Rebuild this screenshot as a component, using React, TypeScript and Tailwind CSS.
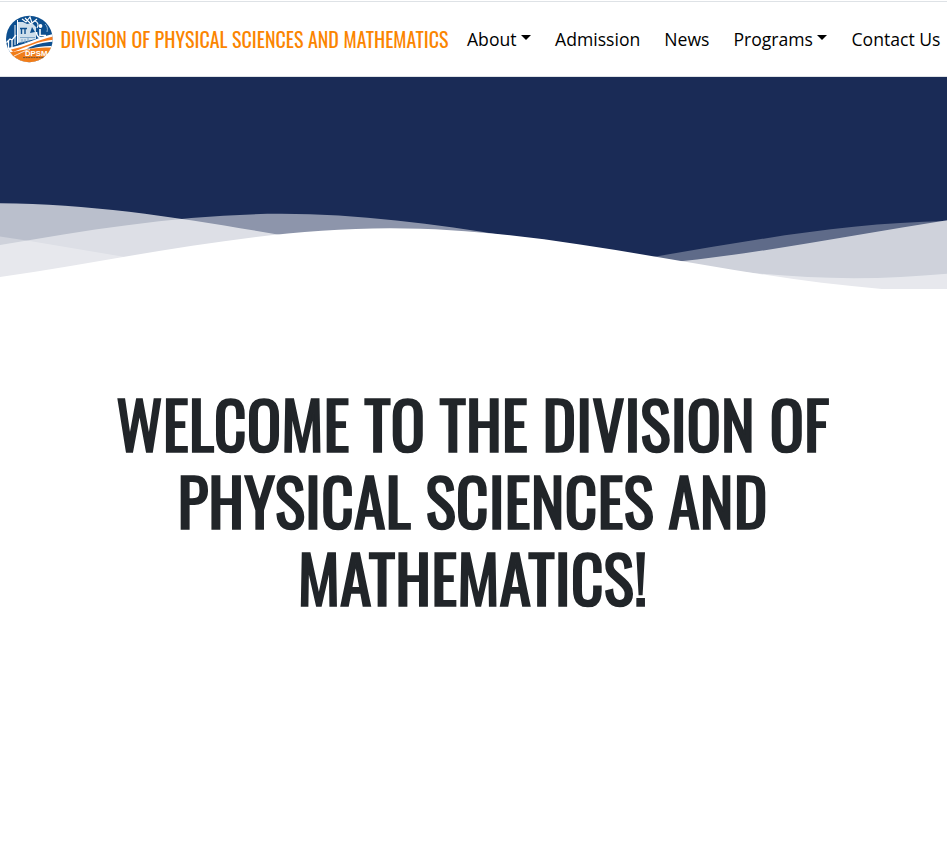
const wavePath = 'M-160 44c30 0 58-18 88-18s58 18 88 18 58-18 88-18 58 18 88 18v44h-352z';

function Logo() {
  return (
    <svg viewBox="0 0 48 48" className="h-12 w-12 shrink-0">
      <defs>
        <clipPath id="seal">
          <circle cx="24.3" cy="24" r="23.3" />
        </clipPath>
      </defs>
      <g clipPath="url(#seal)">
        <rect width="48" height="48" fill="#0d4f8f" />
        <path d="M13 7v21l18-4V12l-4-4-5 1-4-2z" fill="#e6eff6" opacity=".9" />
        <path d="M10 10v20M12.500 5v24" stroke="#fff" strokeWidth="1" />
        <path d="M15 13.500h7M16.500 14v5M20 14v5" stroke="#0d4f8f" strokeWidth="1.400" fill="none" />
        <path d="M15 22.500h15M17 24v4M20 24v4M23 23v4" stroke="#7fa6c8" strokeWidth="1" fill="none" />
        <path d="M25 18l2-6 3 5z" fill="#0d4f8f" />
        <path d="M17 4l4 3 4-5 2 6 5-4M20 3l6 6M30 6c3 1 4 4 2 7" stroke="#fff" strokeWidth="1.100" fill="none" />
        <circle cx="35.500" cy="11" r="1.900" fill="#fff" />
        <path d="M35 14v6.500h6M31.500 17c0 6 6 8 9 4.500" stroke="#fff" strokeWidth="1.600" fill="none" />
        <path d="M40 9c2 2 3 4 2 8" stroke="#b9d0e3" strokeWidth=".8" fill="none" />
        <path d="M1 28l4-4 2 1 4-5M3.500 26v9M7 24v11" stroke="#fff" strokeWidth="1.300" fill="none" />
        <path d="M2 33C18 31 30 23 48 19v29H0z" fill="#fff" />
        <path d="M6 34.500C20 32 32 25 48 21.500v3.300C34 26 22 32 8 37z" fill="#f47b20" />
        <path d="M22 33.500c9-4.500 16-6.300 26-6.800v4.300c-9-.2-15 .6-22 2.600z" fill="#0d4f8f" />
        <path d="M4 37.500c10-1 20-5.500 44-5v16H0z" fill="#f07d1a" />
        <path d="M9 41c5-2 9-5 16-6.500" stroke="#fff" strokeWidth=".8" fill="none" />
      </g>
      <text x="20" y="41.300" fontSize="8" fontWeight="700" fill="#fff" textLength="22.500" lengthAdjust="spacingAndGlyphs" className="font-['Liberation_Sans',sans-serif]">DPSM</text>
      <path d="M18 42.600h21" stroke="#7a5330" strokeWidth="1" strokeDasharray="2 .6" />
    </svg>
  );
}

function NavItem({ label, menu = false }: { label: string; menu?: boolean }) {
  return (
    <a className="flex items-center whitespace-nowrap">
      {label}
      {menu && <span className="ml-[4.5px] mt-[-2px] border-x-[5.3px] border-t-[5.3px] border-x-transparent border-t-black" />}
    </a>
  );
}

export default function App() {
  return (
    <div className="min-h-[867px] overflow-hidden bg-white font-['Open_Sans',sans-serif] text-black">
      <header className="mt-px flex h-[76px] items-center border-y border-[#dee2e6] bg-white pl-[5px]">
        <Logo />
        <span className="ml-[7.5px] w-[406.5px] whitespace-nowrap font-['Oswald',sans-serif] text-[20px] text-[#fb8500]">
          DIVISION OF PHYSICAL SCIENCES AND MATHEMATICS
        </span>
        <nav className="flex gap-6 text-[17.6px]">
          <NavItem label="About" menu />
          <NavItem label="Admission" />
          <NavItem label="News" />
          <NavItem label="Programs" menu />
          <NavItem label="Contact Us" />
        </nav>
      </header>

      <section className="h-[212px] overflow-hidden bg-[#1a2b56] pt-[119px]">
        <svg viewBox="0 24 145.4 28" preserveAspectRatio="none" className="block h-[100px] w-full">
          <path d={wavePath} transform="translate(71.4 0)" fill="#fff" fillOpacity=".7" />
          <path d={wavePath} transform="translate(115.1 3)" fill="#fff" fillOpacity=".5" />
          <path d={wavePath} transform="translate(43.7 5)" fill="#fff" fillOpacity=".3" />
          <path d={wavePath} transform="translate(131.9 7)" fill="#fff" />
        </svg>
      </section>

      <main className="pt-[96px] pr-[2px]">
        <h1 className="text-center font-['Oswald',sans-serif] text-[64px] font-normal leading-[76.8px] text-[#212529] [-webkit-text-stroke:1.7px_#212529]">
          WELCOME TO THE DIVISION OF
          <br />
          PHYSICAL SCIENCES AND
          <br />
          MATHEMATICS!
        </h1>
      </main>
    </div>
  );
}
